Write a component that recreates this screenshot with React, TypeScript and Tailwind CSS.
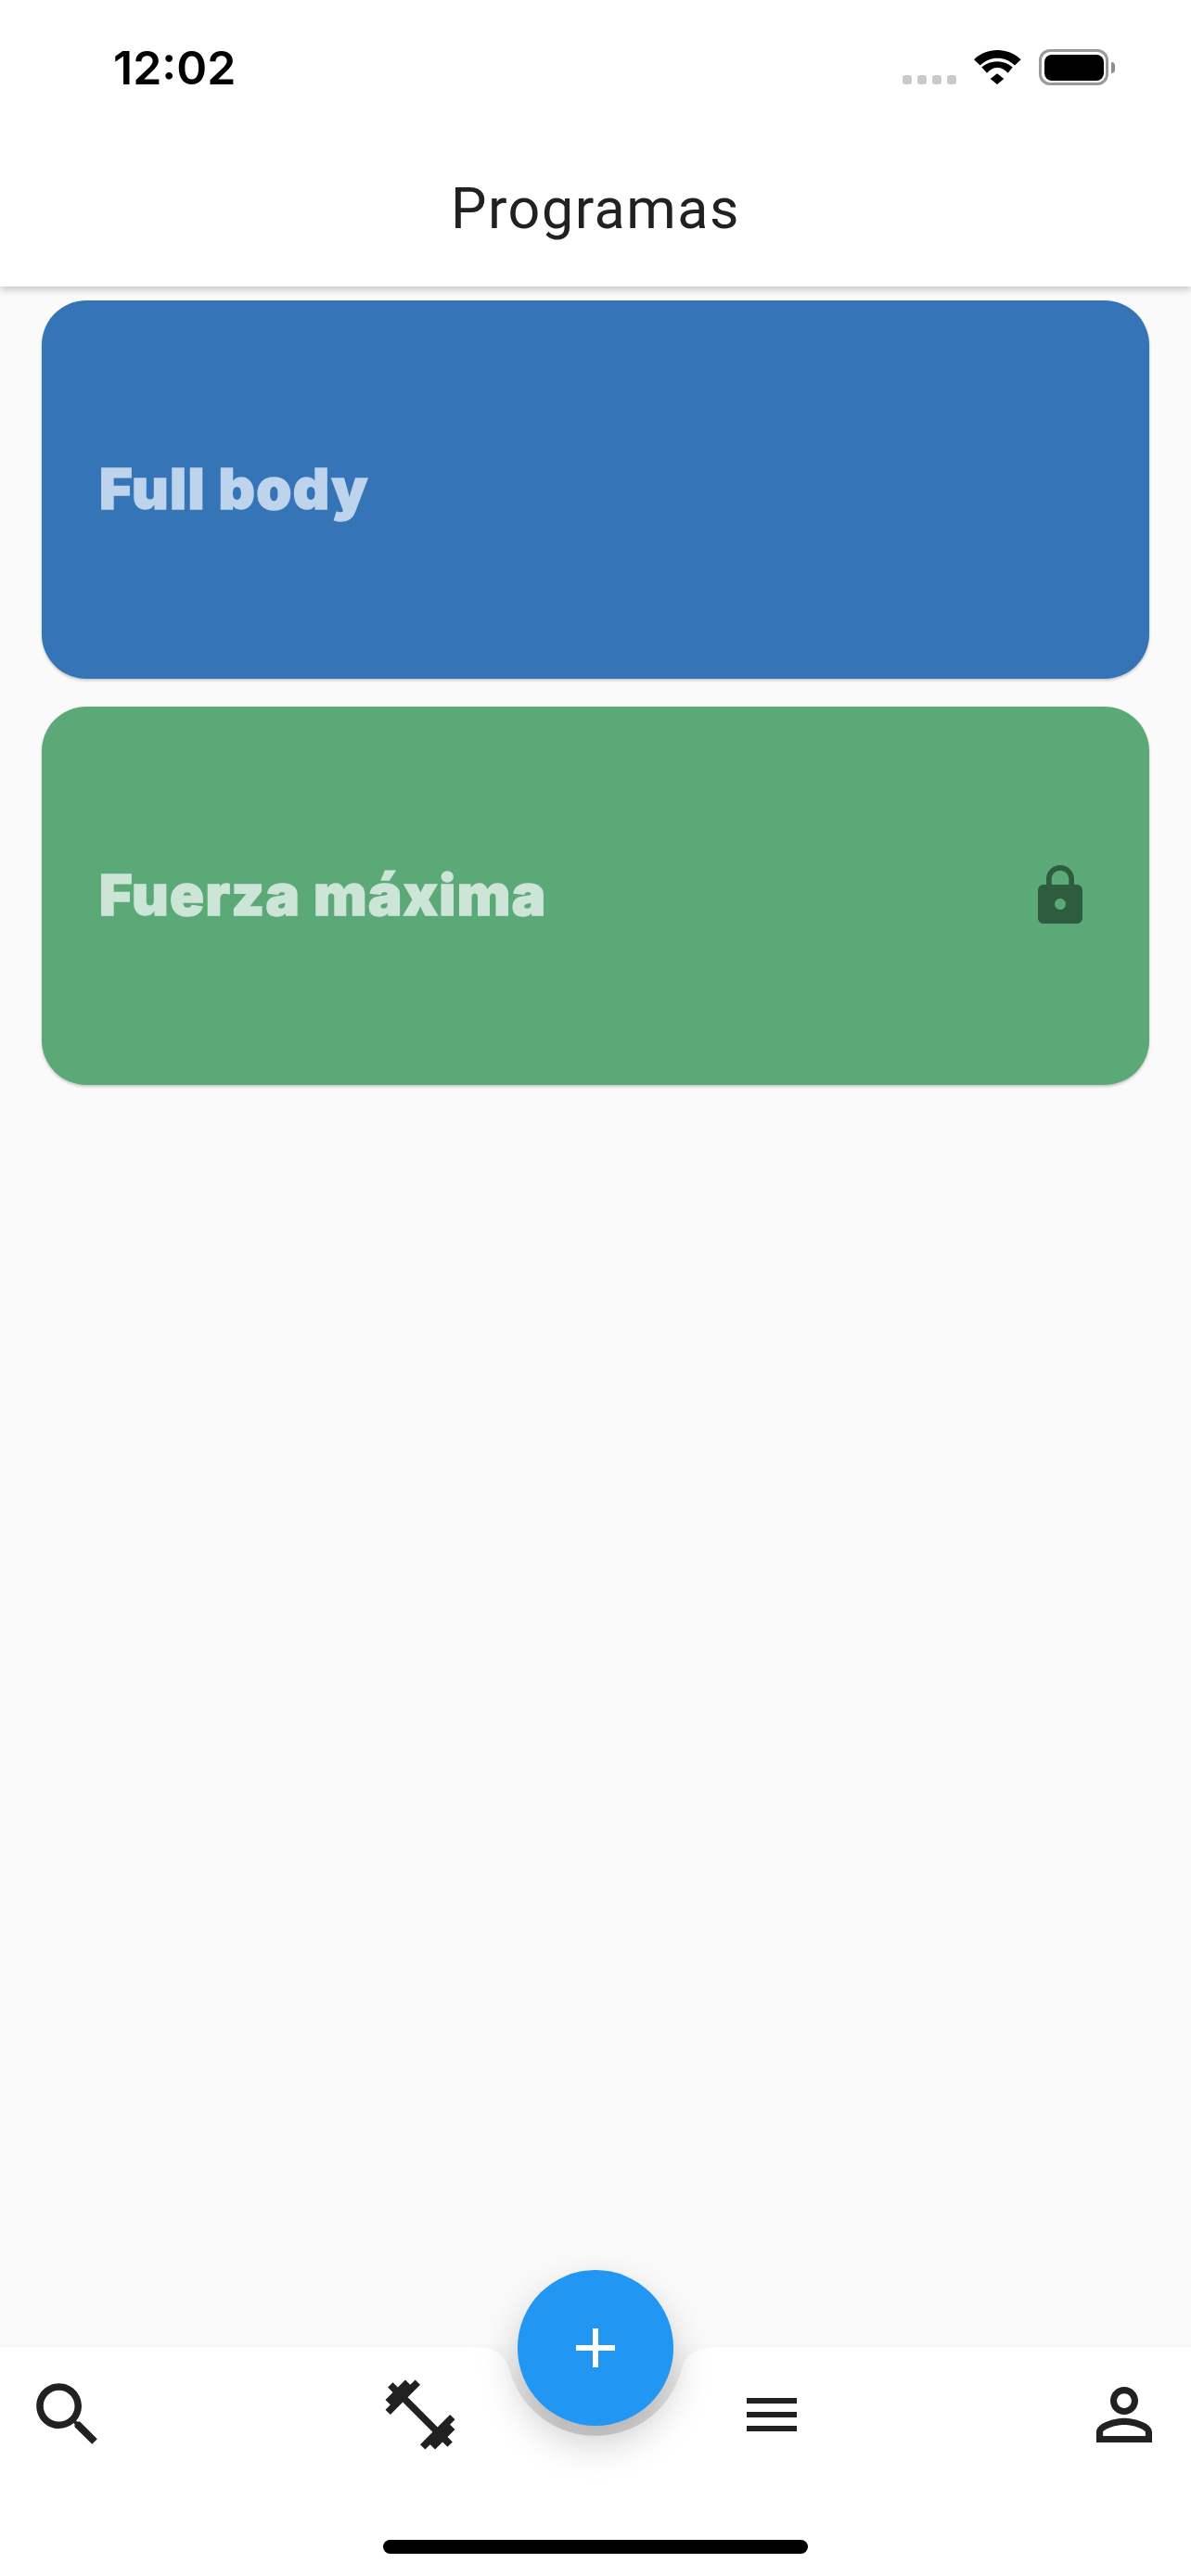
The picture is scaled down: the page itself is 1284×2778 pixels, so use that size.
const programs = [
  { name: 'Full body', card: 'bg-[#3574b6]', text: 'text-[#bdd4ec]', locked: false },
  { name: 'Fuerza máxima', card: 'bg-[#5ba977]', text: 'text-[#cde5d7]', locked: true },
];

function StatusBar() {
  return (
    <div className="flex h-[108px] items-start justify-between pl-[122px] pr-[82px] pt-[43px]">
      <span className="font-['Inter',sans-serif] text-[50px] leading-[60px] font-semibold text-black">12:02</span>
      <div className="mt-[10px] flex items-end">
        <div className="mb-[1px] flex gap-[6px]">
          <span className="h-[10px] w-[10px] rounded-[3px] bg-[#c9c9c9]" />
          <span className="h-[10px] w-[10px] rounded-[3px] bg-[#c9c9c9]" />
          <span className="h-[10px] w-[10px] rounded-[3px] bg-[#c9c9c9]" />
          <span className="h-[10px] w-[10px] rounded-[3px] bg-[#c9c9c9]" />
        </div>
        <svg className="ml-[19px] mb-[1px]" width="51" height="37" viewBox="0 0 51 37" fill="#000">
          <path d="M0 10.3C14-3.4 36.6-3.4 50.6 10.3L44 16.5C33.5 6.1 17.2 6.1 6.7 16.5Z" />
          <path d="M8.3 18.5C18 10.2 32 10.2 41.7 18.5L36.7 24.7C30 17.1 20.6 17.1 14 24.7Z" />
          <path d="M17.7 31L25 25.3 32.3 31 25 37Z" />
        </svg>
        <div className="ml-[19px] flex items-center">
          <div className="h-[39px] w-[75px] rounded-[12px] border-[3.5px] border-[#9a9a9a] p-[2.5px]">
            <div className="h-full w-full rounded-[8px] bg-black" />
          </div>
          <span className="ml-[3px] h-[12px] w-[4px] rounded-r-full bg-[#8f8f8f]" />
        </div>
      </div>
    </div>
  );
}

function IconSlot({ size, path }: { size: number; path: string }) {
  return (
    <div className="flex h-[90px] w-[90px] items-center justify-center">
      <svg width={size} height={size} viewBox="0 0 24 24" fill="#212121">
        <path d={path} />
      </svg>
    </div>
  );
}

export default function App() {
  return (
    <div className="flex h-[2778px] w-[1284px] flex-col overflow-hidden bg-[#fafafa] font-['Roboto',sans-serif]">
      {/* Header */}
      <header className="relative z-10 h-[309px] bg-white shadow-[0_3px_8px_rgba(0,0,0,0.22)]">
        <StatusBar />
        <h1 className="mt-[82px] text-center text-[61px] leading-[70px] tracking-[1.5px] text-[#212121]">Programas</h1>
      </header>

      {/* Cards */}
      <main className="flex flex-1 flex-col gap-[30px] px-[45px] pt-[15px]">
        {programs.map((p) => (
          <div
            key={p.name}
            className={`flex h-[408px] items-center justify-between rounded-[48px] pl-[62px] pr-[60px] shadow-[0_2px_3px_rgba(0,0,0,0.2)] ${p.card}`}
          >
            <span className={`font-['Inter',sans-serif] text-[61px] font-black tracking-[1.4px] [-webkit-text-stroke-width:1.5px] ${p.text}`}>{p.name}</span>
            {p.locked && (
              <svg width="72" height="72" viewBox="0 0 24 24" fill="#2d5c3f">
                <path d="M18 8h-1V6c0-2.76-2.24-5-5-5S7 3.24 7 6v2H6c-1.1 0-2 .9-2 2v10c0 1.1.9 2 2 2h12c1.1 0 2-.9 2-2V10c0-1.1-.9-2-2-2zm-6 9c-1.1 0-2-.9-2-2s.9-2 2-2 2 .9 2 2-.9 2-2 2zm3.1-9H8.9V6c0-1.71 1.39-3.1 3.1-3.1 1.71 0 3.1 1.39 3.1 3.1v2z" />
              </svg>
            )}
          </div>
        ))}
      </main>

      {/* Bottom bar */}
      <footer className="relative h-[247px] bg-white shadow-[0_-1px_3px_rgba(0,0,0,0.05)]">
        {/* notch around the add button */}
        <svg className="absolute left-[506px] top-[-1px]" width="272" height="100" viewBox="0 0 272 100">
          <defs>
            <linearGradient id="notch" x1="0" y1="0" x2="0" y2="1">
              <stop offset="0" stopColor="#f8f8f8" />
              <stop offset="1" stopColor="#d8d8d8" />
            </linearGradient>
          </defs>
          <path fill="url(#notch)" d="M0 1C25 1 38 7 42.6 23A96 96 0 0 0 229.4 23C234 7 247 1 272 1V0H0Z" />
        </svg>
        <button className="absolute left-[558px] top-[-83px] flex h-[168px] w-[168px] items-center justify-center rounded-full bg-[#2196f3] shadow-[0_18px_44px_rgba(0,0,0,0.2)]">
          <svg width="72" height="72" viewBox="0 0 24 24" fill="#fff">
            <path d="M19 13h-6v6h-2v-6H5v-2h6V5h2v6h6v2z" />
          </svg>
        </button>
        <nav className="relative flex justify-between pl-[28px] pr-[27px] pt-[28px]">
          <IconSlot size={90} path="M15.5 14h-.79l-.28-.27C15.41 12.59 16 11.11 16 9.5 16 5.91 13.09 3 9.5 3S3 5.91 3 9.5 5.91 16 9.5 16c1.61 0 3.09-.59 4.23-1.57l.27.28v.79l5 4.99L20.49 19l-4.99-5zm-6 0C7.01 14 5 11.99 5 9.5S7.01 5 9.5 5 14 7.01 14 9.5 11.99 14 9.5 14z" />
          <IconSlot size={90} path="M20.57 14.86L22 13.43 20.57 12 17 15.57 8.43 7 12 3.43 10.57 2 9.14 3.43 7.71 2 5.57 4.14 4.14 2.71 2.71 4.14l1.43 1.43L2 7.71l1.43 1.43L2 10.57 3.43 12 7 8.43 15.57 17 12 20.57 13.43 22l1.43-1.43L16.29 22l2.14-2.14 1.43 1.43 1.43-1.43-1.43-1.43L22 16.29z" />
          <IconSlot size={72} path="M3 18h18v-2H3v2zm0-5h18v-2H3v2zm0-7v2h18V6H3z" />
          <IconSlot size={90} path="M12 5.9c1.16 0 2.1.94 2.1 2.1s-.94 2.1-2.1 2.1S9.9 9.16 9.9 8s.94-2.1 2.1-2.1m0 9c2.97 0 6.1 1.46 6.1 2.1v1.1H5.9V17c0-.64 3.13-2.1 6.1-2.1M12 4C9.79 4 8 5.79 8 8s1.79 4 4 4 4-1.79 4-4-1.79-4-4-4zm0 9c-2.67 0-8 1.34-8 4v3h16v-3c0-2.66-5.33-4-8-4z" />
        </nav>
        <div className="mx-auto mt-[90px] h-[15px] w-[458px] rounded-full bg-black" />
      </footer>
    </div>
  );
}
